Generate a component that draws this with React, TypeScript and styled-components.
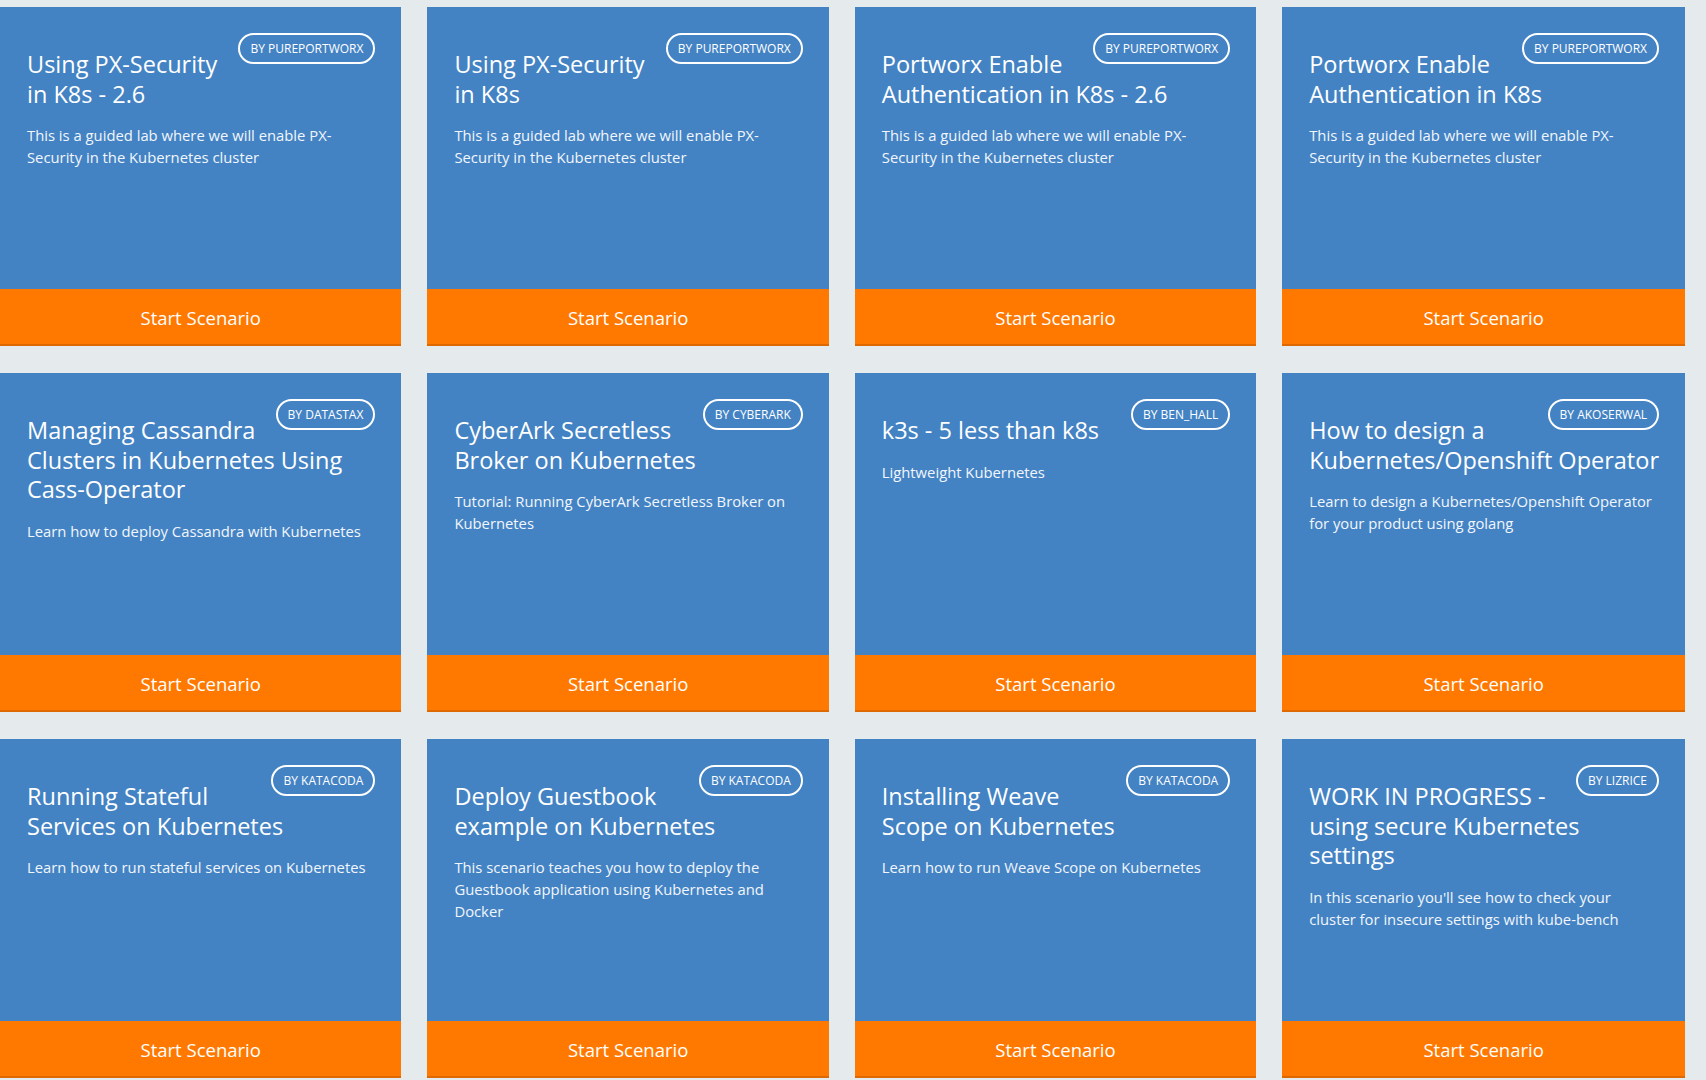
import React from "react";
import styled, { createGlobalStyle } from "styled-components";

const GlobalStyle = createGlobalStyle`
  html, body {
    margin: 0;
    padding: 0;
    background: #e5eaed;
  }
  body {
    font-family: "Open Sans", "Noto Sans", sans-serif;
    -webkit-font-smoothing: antialiased;
  }
`;

const Grid = styled.div`
  display: grid;
  grid-template-columns: repeat(4, 1fr);
  column-gap: 26px;
  row-gap: 27px;
  width: 1685px;
  padding-top: 7px;
`;

const Card = styled.div`
  display: flex;
  flex-direction: column;
  height: 339px;
  background: #4383c4;
  color: #ffffff;
`;

const Body = styled.div`
  flex: 1;
  padding: 26px 26px 0 27px;
`;

const Badge = styled.span`
  float: right;
  box-sizing: border-box;
  height: 31px;
  margin-left: 12px;
  padding: 0 10px;
  border: 2px solid #ffffff;
  border-radius: 16px;
  font-size: 12px;
  line-height: 27px;
  text-transform: uppercase;
  white-space: nowrap;
`;

const Title = styled.h3`
  margin: 17px 0 0;
  font-size: 23.5px;
  font-weight: 400;
  line-height: 29.5px;
  white-space: nowrap;
`;

const Desc = styled.p`
  margin: 15px 0 0;
  font-size: 14.8px;
  line-height: 22px;
  color: #f2f6fb;
  white-space: nowrap;
`;

const Footer = styled.div`
  box-sizing: border-box;
  height: 57px;
  padding-top: 2px;
  background: #ff7900;
  border-bottom: 2px solid #dd6900;
  text-align: center;
  font-size: 18.5px;
  line-height: 53px;
  color: #ffffff;
  cursor: pointer;
`;

type Scenario = {
  title: string[];
  desc: string[];
  by: string;
};

const scenarios: Scenario[] = [
  {
    title: ["Using PX-Security", "in K8s - 2.6"],
    desc: ["This is a guided lab where we will enable PX-", "Security in the Kubernetes cluster"],
    by: "By pureportworx",
  },
  {
    title: ["Using PX-Security", "in K8s"],
    desc: ["This is a guided lab where we will enable PX-", "Security in the Kubernetes cluster"],
    by: "By pureportworx",
  },
  {
    title: ["Portworx Enable", "Authentication in K8s - 2.6"],
    desc: ["This is a guided lab where we will enable PX-", "Security in the Kubernetes cluster"],
    by: "By pureportworx",
  },
  {
    title: ["Portworx Enable", "Authentication in K8s"],
    desc: ["This is a guided lab where we will enable PX-", "Security in the Kubernetes cluster"],
    by: "By pureportworx",
  },
  {
    title: ["Managing Cassandra", "Clusters in Kubernetes Using", "Cass-Operator"],
    desc: ["Learn how to deploy Cassandra with Kubernetes"],
    by: "By datastax",
  },
  {
    title: ["CyberArk Secretless", "Broker on Kubernetes"],
    desc: ["Tutorial: Running CyberArk Secretless Broker on", "Kubernetes"],
    by: "By cyberark",
  },
  {
    title: ["k3s - 5 less than k8s"],
    desc: ["Lightweight Kubernetes"],
    by: "By ben_hall",
  },
  {
    title: ["How to design a", "Kubernetes/Openshift Operator"],
    desc: ["Learn to design a Kubernetes/Openshift Operator", "for your product using golang"],
    by: "By akoserwal",
  },
  {
    title: ["Running Stateful", "Services on Kubernetes"],
    desc: ["Learn how to run stateful services on Kubernetes"],
    by: "By katacoda",
  },
  {
    title: ["Deploy Guestbook", "example on Kubernetes"],
    desc: [
      "This scenario teaches you how to deploy the",
      "Guestbook application using Kubernetes and",
      "Docker",
    ],
    by: "By katacoda",
  },
  {
    title: ["Installing Weave", "Scope on Kubernetes"],
    desc: ["Learn how to run Weave Scope on Kubernetes"],
    by: "By katacoda",
  },
  {
    title: ["WORK IN PROGRESS -", "using secure Kubernetes", "settings"],
    desc: ["In this scenario you'll see how to check your", "cluster for insecure settings with kube-bench"],
    by: "By lizrice",
  },
];

const Lines: React.FC<{ lines: string[] }> = ({ lines }) => (
  <>
    {lines.map((l, i) => (
      <React.Fragment key={i}>
        {i > 0 && <br />}
        {l}
      </React.Fragment>
    ))}
  </>
);

export default function App() {
  return (
    <>
      <GlobalStyle />
      <Grid>
        {scenarios.map((s, i) => (
          <Card key={i}>
            <Body>
              <Badge>{s.by}</Badge>
              <Title>
                <Lines lines={s.title} />
              </Title>
              <Desc>
                <Lines lines={s.desc} />
              </Desc>
            </Body>
            <Footer>Start Scenario</Footer>
          </Card>
        ))}
      </Grid>
    </>
  );
}
